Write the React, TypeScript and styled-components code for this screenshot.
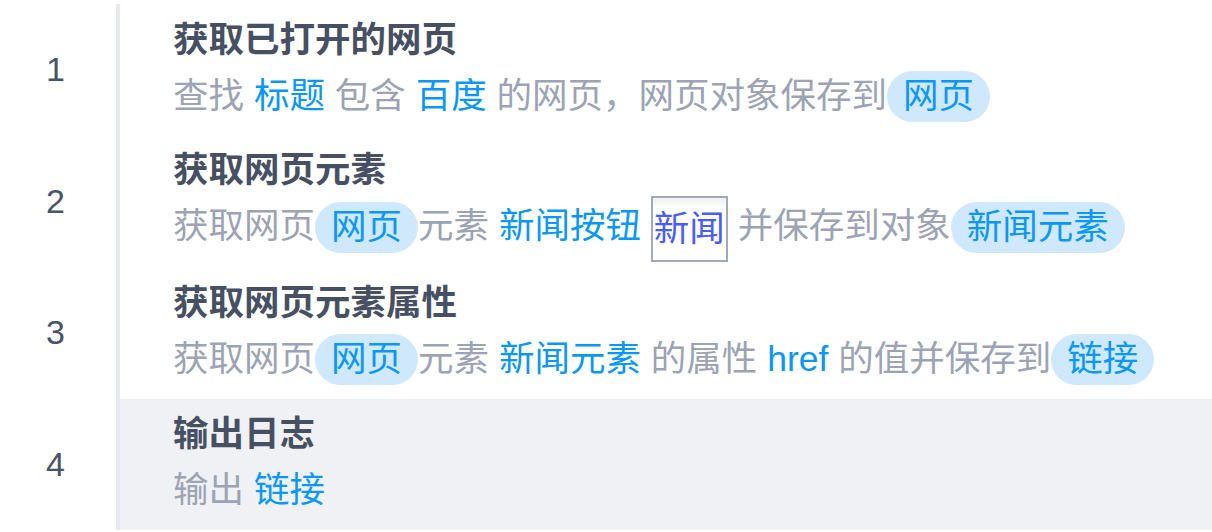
import React from 'react'
import styled, { createGlobalStyle } from 'styled-components'

const GlobalStyle = createGlobalStyle`
  body {
    margin: 0;
    background: #ffffff;
    font-family: "Liberation Sans", "Noto Sans CJK SC", sans-serif;
  }
`

const List = styled.div`
  padding-top: 4px;
`

const Row = styled.div`
  display: grid;
  grid-template-columns: 116px 1fr;
  height: 131.5px;
`

const Index = styled.div`
  display: flex;
  align-items: center;
  justify-content: center;
  padding-right: 5px;
  font-size: 34px;
  color: #485467;
`

const Body = styled.div<{ $active?: boolean }>`
  display: flex;
  flex-direction: column;
  justify-content: center;
  gap: 4px;
  padding-left: 53px;
  border-left: 4px solid #e8e9ee;
  background: ${(p) => (p.$active ? '#f0f1f5' : 'transparent')};
`

const Title = styled.div`
  font-size: 35.5px;
  line-height: 48px;
  font-weight: 700;
  color: #475063;
`

const Desc = styled.div`
  font-size: 35.5px;
  line-height: 56px;
  color: #9ba3b4;
  white-space: nowrap;
`

const Value = styled.span`
  color: #0b97f5;
`

const Var = styled.span`
  display: inline-block;
  line-height: 51px;
  padding: 0 16px;
  border-radius: 26px;
  background: #cfe8fc;
  color: #0b97f5;
  vertical-align: middle;
  margin-top: -4px;
`

const Snapshot = styled.span`
  display: inline-block;
  box-sizing: border-box;
  height: 66px;
  padding: 0 1px;
  margin: -6px 0;
  border: 2px solid #a3aab7;
  background: linear-gradient(#efefef 0, #ffffff 10px);
  color: #4a5cf6;
  line-height: 62px;
  vertical-align: middle;
`

const steps = [
  {
    title: '获取已打开的网页',
    desc: (
      <>
        查找 <Value>标题</Value> 包含 <Value>百度</Value> 的网页，网页对象保存到<Var>网页</Var>
      </>
    ),
  },
  {
    title: '获取网页元素',
    desc: (
      <>
        获取网页<Var>网页</Var>元素 <Value>新闻按钮</Value> <Snapshot>新闻</Snapshot> 并保存到对象<Var>新闻元素</Var>
      </>
    ),
  },
  {
    title: '获取网页元素属性',
    desc: (
      <>
        获取网页<Var>网页</Var>元素 <Value>新闻元素</Value> 的属性 <Value>href</Value> 的值并保存到<Var>链接</Var>
      </>
    ),
  },
  {
    title: '输出日志',
    desc: (
      <>
        输出 <Value>链接</Value>
      </>
    ),
  },
]

const App = () => {
  return (
    <>
      <GlobalStyle />
      <List>
        {steps.map((step, i) => (
          <Row key={i}>
            <Index>{i + 1}</Index>
            <Body $active={i === 3}>
              <Title>{step.title}</Title>
              <Desc>{step.desc}</Desc>
            </Body>
          </Row>
        ))}
      </List>
    </>
  )
}

export default App
